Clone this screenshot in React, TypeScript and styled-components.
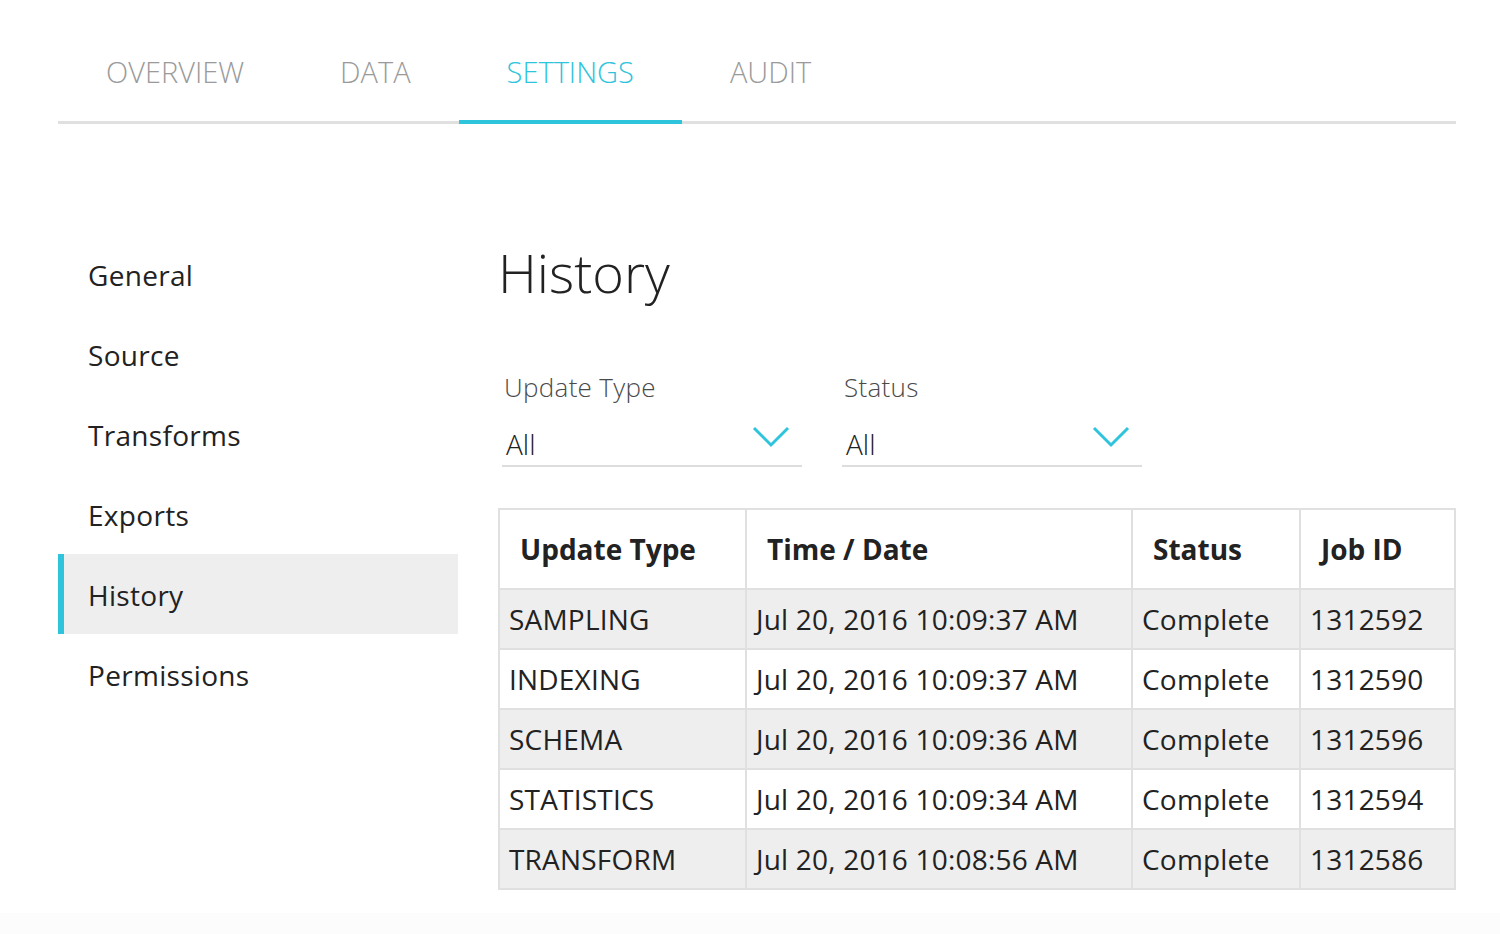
import {useState} from 'react';
import styled, {createGlobalStyle} from 'styled-components';

const TABS = ['OVERVIEW', 'DATA', 'SETTINGS', 'AUDIT'];
const NAV = ['General', 'Source', 'Transforms', 'Exports', 'History', 'Permissions'];

interface Job {
  type: string;
  time: string;
  status: string;
  id: string;
}

const JOBS: Job[] = [
  {type: 'SAMPLING', time: 'Jul 20, 2016 10:09:37 AM', status: 'Complete', id: '1312592'},
  {type: 'INDEXING', time: 'Jul 20, 2016 10:09:37 AM', status: 'Complete', id: '1312590'},
  {type: 'SCHEMA', time: 'Jul 20, 2016 10:09:36 AM', status: 'Complete', id: '1312596'},
  {type: 'STATISTICS', time: 'Jul 20, 2016 10:09:34 AM', status: 'Complete', id: '1312594'},
  {type: 'TRANSFORM', time: 'Jul 20, 2016 10:08:56 AM', status: 'Complete', id: '1312586'},
];

const COLS = [
  {label: 'Update Type', width: 247},
  {label: 'Time / Date', width: 386},
  {label: 'Status', width: 168},
  {label: 'Job ID', width: 155},
];

const Chevron = () => (
  <svg width="38" height="22" viewBox="0 0 38 22" fill="none">
    <polyline points="2,2 19,19 36,2" stroke="#2ec4dc" strokeWidth="3" />
  </svg>
);

const Filter = ({label}: {label: string}) => (
  <FilterBox>
    <FilterLabel>{label}</FilterLabel>
    <Select>
      <SelectValue>All</SelectValue>
      <Chevron />
    </Select>
  </FilterBox>
);

const App = () => {
  const [tab, setTab] = useState('SETTINGS');
  const [section, setSection] = useState('History');

  return (
    <Page>
      <GlobalStyle />
      <TabBar>
        {TABS.map(t => (
          <Tab key={t} active={t === tab} onClick={() => setTab(t)}>{t}</Tab>
        ))}
      </TabBar>
      <Body>
        <SideNav>
          {NAV.map(n => (
            <NavItem key={n} active={n === section} onClick={() => setSection(n)}>{n}</NavItem>
          ))}
        </SideNav>
        <Content>
          <Heading>History</Heading>
          <Filters>
            <Filter label="Update Type" />
            <Filter label="Status" />
          </Filters>
          <Table>
            <colgroup>
              {COLS.map(c => <col key={c.label} style={{width: c.width}} />)}
            </colgroup>
            <thead>
              <tr>
                {COLS.map(c => <Th key={c.label}>{c.label}</Th>)}
              </tr>
            </thead>
            <tbody>
              {JOBS.map((job, i) => (
                <Row key={job.id} striped={i % 2 === 0}>
                  <Td>{job.type}</Td>
                  <Td>{job.time}</Td>
                  <Td>{job.status}</Td>
                  <Td>{job.id}</Td>
                </Row>
              ))}
            </tbody>
          </Table>
        </Content>
      </Body>
      <Footer />
    </Page>
  );
};

export default App;

const GlobalStyle = createGlobalStyle`
  html, body {
    margin: 0;
    padding: 0;
    background: #ffffff;
    font-family: "Open Sans", "Noto Sans", sans-serif;
    color: #222;
  }
  * {
    box-sizing: border-box;
  }
`

const Page = styled.div`
  display: flex;
  flex-direction: column;
  min-height: 100vh;
`

const TabBar = styled.div`
  display: flex;
  margin: 0 44px 0 58px;
  border-bottom: 3px solid #e0e0e0;
`

const Tab = styled.div.withConfig({shouldForwardProp: p => p !== 'active'})<{active: boolean}>`
  padding: 50px 48px 26px;
  margin-bottom: -3px;
  font-size: 29px;
  font-weight: 300;
  line-height: 44px;
  color: ${p => (p.active ? '#2ec4dc' : '#9a9a9a')};
  border-bottom: 4px solid ${p => (p.active ? '#2ec4dc' : 'transparent')};
  cursor: pointer;
`

const Body = styled.div`
  display: flex;
  gap: 40px;
  margin: 110px 44px 0 58px;
`

const SideNav = styled.div`
  display: flex;
  flex-direction: column;
  width: 400px;
  flex-shrink: 0;
`

const NavItem = styled.div.withConfig({shouldForwardProp: p => p !== 'active'})<{active: boolean}>`
  display: flex;
  align-items: center;
  height: 80px;
  padding: 2px 0 0 24px;
  font-size: 28px;
  letter-spacing: 0.3px;
  color: #222;
  background: ${p => (p.active ? '#eeeeee' : 'transparent')};
  border-left: 6px solid ${p => (p.active ? '#2ec4dc' : 'transparent')};
  cursor: pointer;
`

const Content = styled.div`
  flex: 1;
  padding-top: 6px;
`

const Heading = styled.h1`
  margin: 0 0 67px;
  font-size: 54px;
  font-weight: 300;
  line-height: 64px;
  color: #222;
`

const Filters = styled.div`
  display: flex;
  gap: 40px;
  margin-left: 4px;
`

const FilterBox = styled.div`
  width: 300px;
`

const FilterLabel = styled.div`
  padding-left: 2px;
  font-size: 26px;
  font-weight: 300;
  letter-spacing: 0.3px;
  line-height: 32px;
  color: #4a4a4a;
`

const Select = styled.div`
  display: flex;
  justify-content: space-between;
  align-items: flex-start;
  margin-top: 23px;
  padding: 0 12px 3px 4px;
  border-bottom: 2px solid #dddddd;
`

const SelectValue = styled.span`
  font-size: 28px;
  font-weight: 300;
  line-height: 36px;
  color: #222;
`

const Table = styled.table`
  width: 956px;
  margin-top: 41px;
  border-collapse: collapse;
  table-layout: fixed;
  border: 2px solid #e0e0e0;
`

const Th = styled.th`
  height: 80px;
  padding: 0 20px;
  text-align: left;
  font-size: 28px;
  font-weight: 700;
  color: #222;
  border: 2px solid #e0e0e0;
`

const Row = styled.tr.withConfig({shouldForwardProp: p => p !== 'striped'})<{striped: boolean}>`
  background: ${p => (p.striped ? '#eeeeee' : '#ffffff')};
`

const Td = styled.td`
  height: 60px;
  padding: 0 9px;
  font-size: 28px;
  letter-spacing: 0.2px;
  color: #222;
  white-space: nowrap;
  border: 2px solid #e0e0e0;
`

const Footer = styled.div`
  flex: 1;
  margin-top: 23px;
  background: #fcfcfc;
`
